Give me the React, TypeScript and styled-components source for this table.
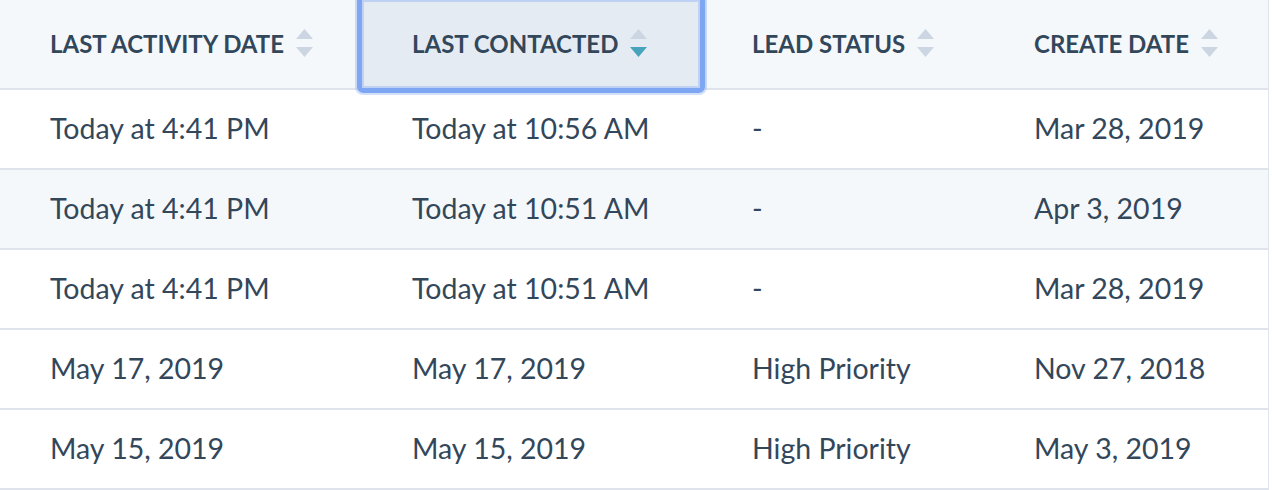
import React from "react";
import styled, { createGlobalStyle } from "styled-components";

const Global = createGlobalStyle`
  html, body { margin: 0; padding: 0; background: #ffffff; }
  body { font-family: Lato, "Open Sans", sans-serif; color: #33475b; }
`;

const COLS = "357px 349px 282px 280px";

const Table = styled.div`
  width: 1269px;
  border-right: 1px solid #dfe3eb;
  box-sizing: border-box;
`;

const HeadRow = styled.div`
  display: grid;
  grid-template-columns: ${COLS};
  background: #f5f8fa;
  border-bottom: 2px solid #dfe3eb;
`;

const HeadCell = styled.div<{ $pad: number; $active?: boolean }>`
  position: relative;
  height: 88px;
  display: flex;
  align-items: center;
  padding-left: ${(p) => p.$pad}px;
  padding-bottom: 1px;
  box-sizing: border-box;
  background: ${(p) => (p.$active ? "#e5ebf3" : "transparent")};
  font-size: 24px;
  font-weight: 700;
  text-transform: uppercase;
  color: #33475b;
  z-index: ${(p) => (p.$active ? 2 : 1)};
  ${(p) =>
    p.$active &&
    `
    &::after {
      content: "";
      position: absolute;
      top: -5px;
      left: 0;
      right: 1px;
      bottom: -5px;
      border: 5px solid #7ea6f2;
      border-radius: 6px;
      box-shadow: 0 0 0 2px rgba(126, 166, 242, 0.35), inset 0 0 0 2px #bfd2f6;
      pointer-events: none;
    }
  `}
`;

const Label = styled.span`
  white-space: nowrap;
`;

const SortIcon = styled.svg`
  margin-left: 12px;
  flex: none;
`;

const Row = styled.div<{ $alt?: boolean }>`
  display: grid;
  grid-template-columns: ${COLS};
  height: 80px;
  box-sizing: border-box;
  background: ${(p) => (p.$alt ? "#f5f8fa" : "#ffffff")};
  border-bottom: 2px solid #dfe3eb;
`;

const Cell = styled.div<{ $pad: number }>`
  display: flex;
  align-items: center;
  padding-left: ${(p) => p.$pad}px;
  padding-bottom: 3px;
  font-size: 28.5px;
  font-weight: 400;
  color: #33475b;
  white-space: nowrap;
`;

const Sort = ({ active }: { active?: boolean }) => (
  <SortIcon width="17" height="29" viewBox="0 0 17 29">
    <polygon points="8.5,0 17,10 0,10" fill="#cbd6e2" />
    <polygon points="0,18 17,18 8.5,28" fill={active ? "#48a4ba" : "#cbd6e2"} />
  </SortIcon>
);

const pads = [50, 55, 46, 46];
const headers = ["Last Activity Date", "Last Contacted", "Lead Status", "Create Date"];
const rows = [
  ["Today at 4:41 PM", "Today at 10:56 AM", "-", "Mar 28, 2019"],
  ["Today at 4:41 PM", "Today at 10:51 AM", "-", "Apr 3, 2019"],
  ["Today at 4:41 PM", "Today at 10:51 AM", "-", "Mar 28, 2019"],
  ["May 17, 2019", "May 17, 2019", "High Priority", "Nov 27, 2018"],
  ["May 15, 2019", "May 15, 2019", "High Priority", "May 3, 2019"],
];

export default function App() {
  return (
    <>
      <Global />
      <Table>
        <HeadRow>
          {headers.map((h, i) => (
            <HeadCell key={h} $pad={pads[i]} $active={i === 1}>
              <Label>{h}</Label>
              <Sort active={i === 1} />
            </HeadCell>
          ))}
        </HeadRow>
        {rows.map((r, ri) => (
          <Row key={ri} $alt={ri === 1}>
            {r.map((c, ci) => (
              <Cell key={ci} $pad={pads[ci]}>
                {c}
              </Cell>
            ))}
          </Row>
        ))}
      </Table>
    </>
  );
}
